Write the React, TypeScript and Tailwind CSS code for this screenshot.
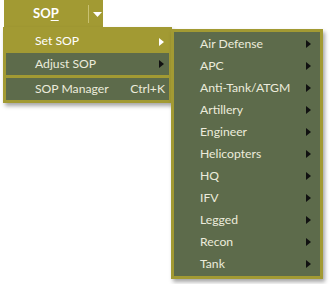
import React from "react";

const OLIVE = "bg-[#a29a33]";
const GREEN = "bg-[#5d6b4b]";

function Arrow({ light }: { light?: boolean }) {
  return (
    <svg width="5" height="8" viewBox="0 0 5 8" className={light ? "fill-white" : "fill-[#111]"}>
      <path d="M0 0 L5 4 L0 8 Z" />
    </svg>
  );
}

const units = [
  "Air Defense",
  "APC",
  "Anti-Tank/ATGM",
  "Artillery",
  "Engineer",
  "Helicopters",
  "HQ",
  "IFV",
  "Legged",
  "Recon",
  "Tank",
];

export default function App() {
  return (
    <div
      className="relative h-[284px] w-[330px] overflow-hidden bg-white text-[12.2px] text-[#ecebdc]"
      style={{ fontFamily: 'Lato, "Noto Sans", sans-serif' }}
    >
      {/* split button */}
      <div className={`absolute left-[4px] top-0 flex h-[28px] w-[99px] items-center ${OLIVE}`}>
        <span className="ml-[29px] w-[55px] text-[13px] font-bold text-white">
          SO<span className="underline underline-offset-2">P</span>
        </span>
        <div className="h-[18px] w-px bg-[#c9c171]" />
        <svg width="9" height="5" viewBox="0 0 9 5" className="ml-[4px] fill-white">
          <path d="M0 0 H9 L4.5 5 Z" />
        </svg>
      </div>

      {/* main menu */}
      <div
        className={`absolute left-[3px] top-[27px] w-[169px] p-[3px] ${OLIVE} shadow-[2px_3px_4px_rgba(0,0,0,0.35)]`}
      >
        <div className="flex h-[23px] items-center pl-[29px] pr-[5px] text-white">
          <span className="flex-1">Set SOP</span>
          <Arrow light />
        </div>
        <div className={`flex h-[22px] items-center pl-[29px] pr-[5px] ${GREEN}`}>
          <span className="flex-1">Adjust SOP</span>
          <Arrow />
        </div>
        <div className="h-[3px]" />
        <div className={`flex h-[22px] items-center pl-[29px] pr-[4px] ${GREEN}`}>
          <span className="flex-1">SOP Manager</span>
          <span>Ctrl+K</span>
        </div>
      </div>

      {/* submenu */}
      <div
        className={`absolute left-[171px] top-[29px] w-[152px] border-[3px] border-[#a29a33] ${GREEN} py-[1px] shadow-[2px_3px_4px_rgba(0,0,0,0.35)]`}
      >
        {units.map((u) => (
          <div key={u} className="flex h-[22px] items-center pl-[26px] pr-[9px]">
            <span className="flex-1">{u}</span>
            <Arrow />
          </div>
        ))}
      </div>
    </div>
  );
}
